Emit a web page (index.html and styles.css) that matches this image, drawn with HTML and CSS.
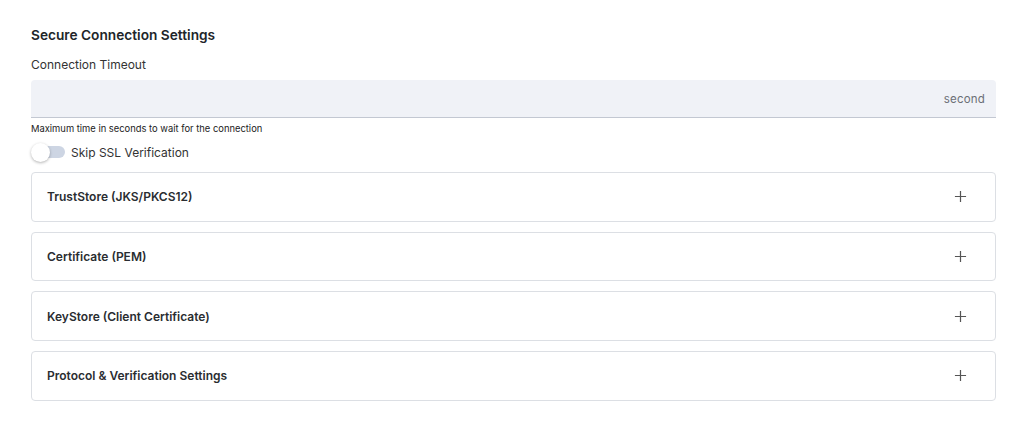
FILE: index.html
```html
<!DOCTYPE html>
<html>
<head>
<meta charset="utf-8">
<link rel="stylesheet" href="styles.css">
</head>
<body>
<div class="page">
  <h2 class="title">Secure Connection Settings</h2>
  <div class="field-label">Connection Timeout</div>
  <div class="input">
    <span class="suffix">second</span>
  </div>
  <div class="helper">Maximum time in seconds to wait for the connection</div>
  <label class="switch-row">
    <span class="switch"><span class="track"></span><span class="thumb"></span></span>
    <span class="switch-label">Skip SSL Verification</span>
  </label>
  <div class="panels">
    <div class="panel"><span class="panel-title">TrustStore (JKS/PKCS12)</span><svg class="plus" viewBox="0 0 14 14"><path d="M7 1v12M1 7h12"/></svg></div>
    <div class="panel"><span class="panel-title">Certificate (PEM)</span><svg class="plus" viewBox="0 0 14 14"><path d="M7 1v12M1 7h12"/></svg></div>
    <div class="panel"><span class="panel-title">KeyStore (Client Certificate)</span><svg class="plus" viewBox="0 0 14 14"><path d="M7 1v12M1 7h12"/></svg></div>
    <div class="panel"><span class="panel-title">Protocol &amp; Verification Settings</span><svg class="plus" viewBox="0 0 14 14"><path d="M7 1v12M1 7h12"/></svg></div>
  </div>
</div>
</body>
</html>
```
FILE: styles.css
```css
* { box-sizing: border-box; }
html, body { margin: 0; padding: 0; background: #fff; }
body { font-family: Inter, "Noto Sans", sans-serif; color: #222; }
.page { padding: 27px 28px 0 31px; }
.title { margin: 0; font-size: 13.7px; font-weight: 600; line-height: 16px; color: #212529; }
.field-label { margin-top: 14px; font-size: 12px; line-height: 16px; color: #333; }
.input {
  margin-top: 7px; height: 38px; background: #f0f2f7;
  border-radius: 4px 4px 0 0; border-bottom: 1.5px solid #c3c8d2;
  display: flex; align-items: center; justify-content: flex-end; padding-right: 11px;
}
.suffix { font-size: 11.5px; color: #6b6f76; letter-spacing: 0.2px; }
.helper { margin-top: 5px; font-size: 9.4px; line-height: 11px; color: #222; }
.switch-row { display: flex; align-items: center; margin-top: 8px; height: 20px; gap: 6px; }
.switch { position: relative; width: 34px; height: 20px; display: inline-block; }
.track { position: absolute; left: 3px; top: 4px; width: 31px; height: 12px; border-radius: 6px; background: #cdd5e3; }
.thumb { position: absolute; left: 0; top: 0.5px; width: 19px; height: 19px; border-radius: 50%; background: #fff; box-shadow: 0 1px 3px rgba(0,0,0,0.3); }
.switch-label { font-size: 12px; color: #333; }
.panels { display: flex; flex-direction: column; gap: 10px; margin-top: 10px; }
.panel {
  height: 49.7px; border: 1px solid #dcdfe4; border-radius: 4px;
  display: flex; align-items: center; justify-content: space-between;
  padding: 0 28px 0 15px;
}
.panel-title { font-size: 12px; font-weight: 600; color: #2a2d31; }
.plus { width: 13px; height: 13px; stroke: #555; stroke-width: 1.3; fill: none; }
```
